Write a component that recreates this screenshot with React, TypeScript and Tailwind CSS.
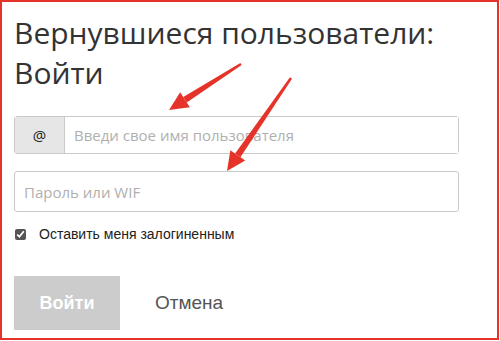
import React from 'react'

function Arrow({ x1, y1, x2, y2 }: { x1: number; y1: number; x2: number; y2: number }) {
  const dx = x2 - x1
  const dy = y2 - y1
  const len = Math.hypot(dx, dy)
  const ux = dx / len
  const uy = dy / len
  const head = 19
  const half = 9
  const bx = x2 - ux * head
  const by = y2 - uy * head
  const px = -uy
  const py = ux
  return (
    <g fill="#e5332a" stroke="none">
      <polygon points={`${x1 - px * 1.2},${y1 - py * 1.2} ${x1 + px * 1.2},${y1 + py * 1.2} ${bx + px * 3.2},${by + py * 3.2} ${bx - px * 3.2},${by - py * 3.2}`} />
      <polygon points={`${x2},${y2} ${bx + px * half},${by + py * half} ${bx - px * half},${by - py * half}`} />
    </g>
  )
}

export default function App() {
  return (
    <div className="relative h-[341px] w-[500px] bg-white">
      <div className="h-[340px] w-[499px] border-2 border-[#e5332a] bg-white px-[12px] pt-[11px]">
        <h1 className="text-[30px] leading-[40px] text-[#333] font-['Open_Sans',sans-serif]">
          <span className="block">Вернувшиеся пользователи:</span>
          <span className="block">Войти</span>
        </h1>
        <div className="mt-[23px] w-[445px]">
          <div className="flex h-[38px] rounded-[3px] border border-[#cacaca]">
            <span className="grid w-[50px] place-items-center border-r border-[#cacaca] bg-[#e6e6e6] text-[15px] text-[#222] font-['Open_Sans',sans-serif]">
              @
            </span>
            <input
              className="flex-1 bg-white px-[9px] text-[15px] text-[#333] outline-none placeholder:text-[#b0b0b0] font-['Open_Sans',sans-serif]"
              placeholder="Введи свое имя пользователя"
            />
          </div>
          <input
            className="mt-[17px] block h-[41px] w-full rounded-[3px] border border-[#cacaca] px-[9px] text-[15px] text-[#333] outline-none placeholder:text-[#b0b0b0] font-['Open_Sans',sans-serif]"
            placeholder="Пароль или WIF"
          />
        </div>
        <label className="mt-[12px] flex items-center gap-[13px] text-[14px] text-[#222] font-['Liberation_Sans',sans-serif]">
          <input type="checkbox" defaultChecked className="ml-[1px] h-[11px] w-[11px] accent-[#555]" />
          Оставить меня залогиненным
        </label>
        <div className="mt-[31px] flex items-center gap-[35px]">
          <button className="h-[54px] w-[106px] bg-[#cccccc] text-[18px] font-bold text-white font-['Liberation_Sans',sans-serif]">
            Войти
          </button>
          <button className="text-[19px] text-[#555] font-['Liberation_Sans',sans-serif]">Отмена</button>
        </div>
      </div>
      <svg className="pointer-events-none absolute left-0 top-0" width="500" height="341">
        <Arrow x1={241} y1={64} x2={169} y2={110} />
        <Arrow x1={291} y1={78} x2={227} y2={171} />
      </svg>
    </div>
  )
}
